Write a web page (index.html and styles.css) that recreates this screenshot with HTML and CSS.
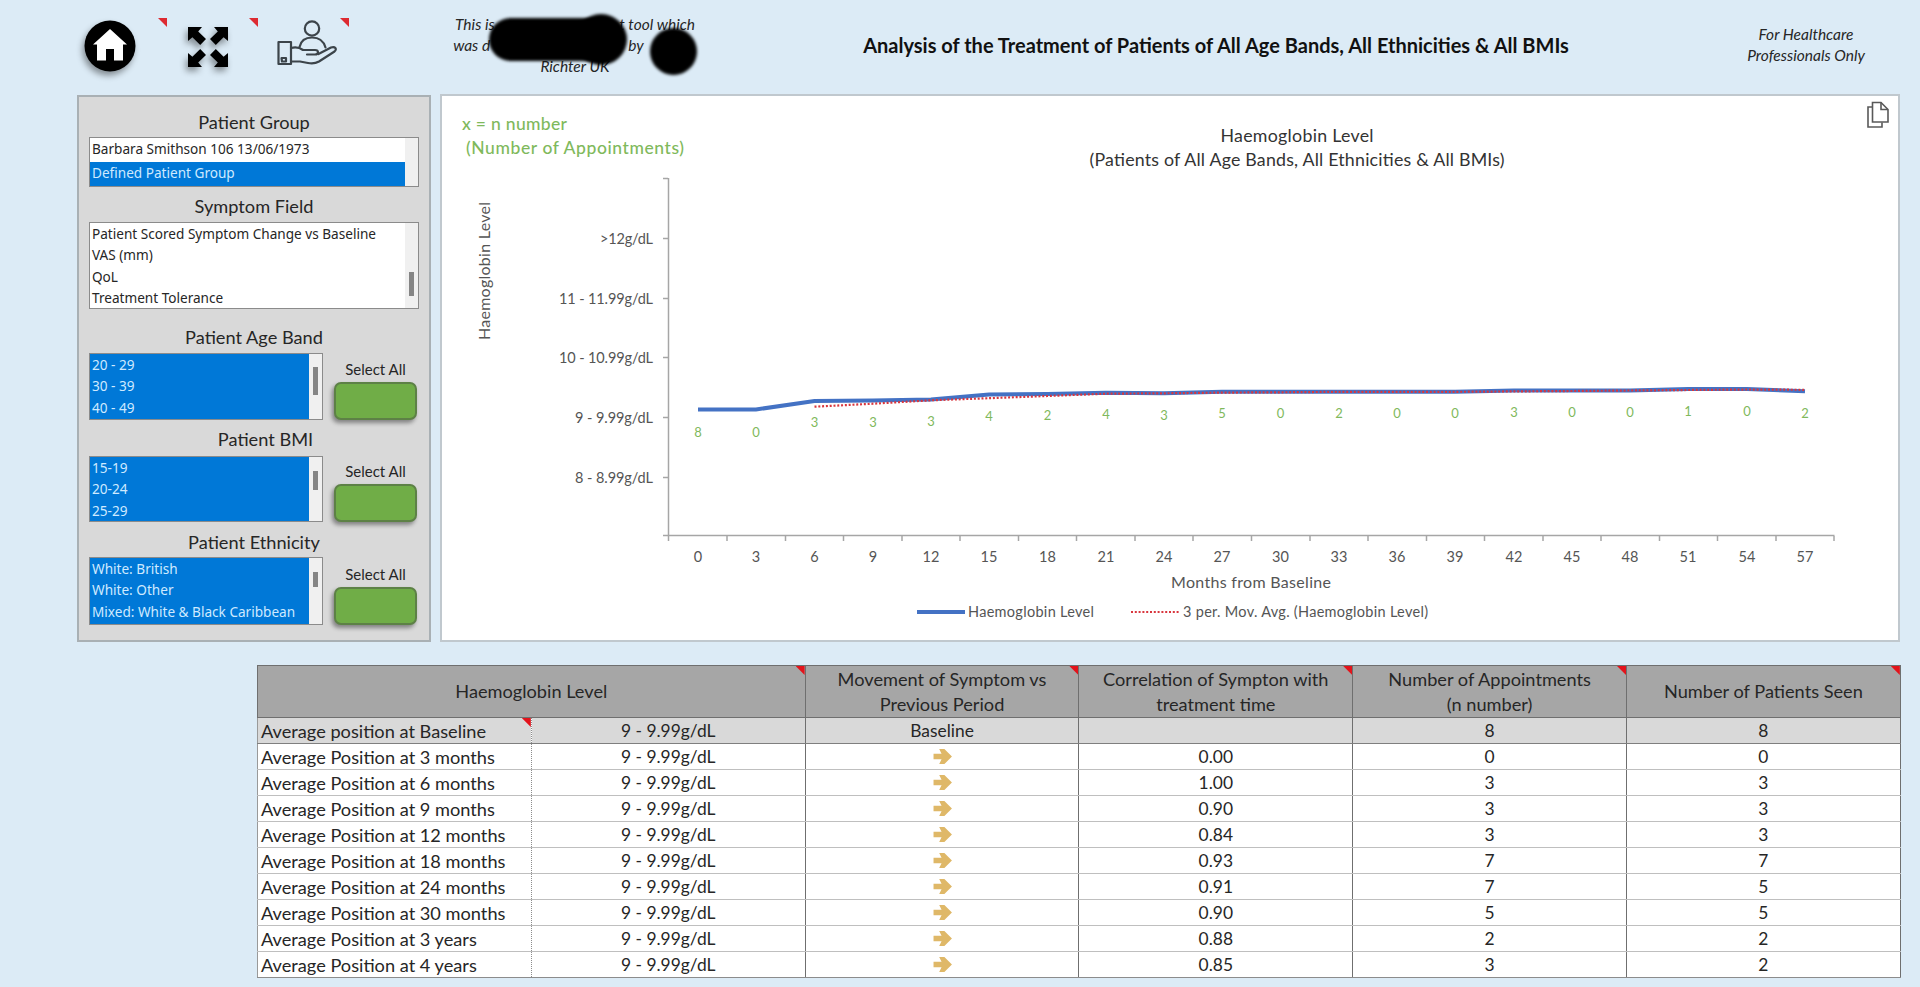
FILE: index.html
```
<!DOCTYPE html>
<html lang="en">
<head>
<meta charset="UTF-8" />
<meta name="viewport" content="width=device-width, initial-scale=1" />
<title>Analysis of Treatment</title>
<link rel="stylesheet" href="styles.css">
</head>
<body>

<header class="topbar">
  <nav class="tools">
    <a class="tool tool-home" aria-label="Home">
      <svg width="52" height="52" viewBox="0 0 52 52">
        <circle cx="26" cy="26" r="25.5" fill="#000" />
        <path d="M26 9 L43 24.5 H39 V40.5 H30 V29 H22 V40.5 H13 V24.5 H9 Z" fill="#fff" />
      </svg>
    </a>
    <a class="tool tool-expand" aria-label="Full screen">
      <svg width="40" height="40" viewBox="0 0 40 40">
        <g id="corner">
          <path d="M0 0 H14 L10.2 4.4 L18 12 L12.2 18 L4.4 10.2 L0 14 Z" />
        </g>
        <use href="#corner" transform="matrix(-1 0 0 1 40 0)" />
        <use href="#corner" transform="matrix(1 0 0 -1 0 40)" />
        <use href="#corner" transform="matrix(-1 0 0 -1 40 40)" />
      </svg>
    </a>
    <a class="tool tool-care" aria-label="Patient care">
      <svg width="61" height="46" viewBox="0 0 61 46" fill="none" stroke="#3c444a" stroke-width="2.2" stroke-linejoin="round" stroke-linecap="round">
        <circle cx="35" cy="8.5" r="7.2" />
        <path d="M22.5 27 C24 20 29 17.5 35 17.5 C41 17.5 46.500 20.500 48.500 27.500" />
        <rect x="1.500" y="22" width="12.500" height="22" />
        <path d="M4.500 38 H9 V41.500 H5 Z" />
        <path d="M14 28 C19 26.500 22 27 26 30 H38 C42 30 42 34.500 38 34.500 H30" />
        <path d="M41.500 34 L54 27.500 C58 26 60.500 29 57.500 31.500 L42 41.500 C38 43.800 35 43.800 31 43 L23 41.500 H14" />
      </svg>
    </a>
  </nav>
  <div class="about">
    <p>This is <span class="gap gap-1"></span>t tool which</p>
    <p>was d<span class="gap gap-2"></span>by <span class="gap gap-3"></span></p>
    <p>Richter UK</p>
    <span class="blot blot-bar"></span>
    <span class="blot blot-end"></span>
    <span class="blot blot-dot"></span>
  </div>
  <h1>Analysis of the Treatment of Patients of All Age Bands, All Ethnicities &amp; All BMIs</h1>
  <p class="audience">For Healthcare<br>Professionals Only</p>
</header>

<main class="dashboard">
  <aside class="filters">
    <h2 class="h-group">Patient Group</h2>
    <ul class="listbox list-group">
      <li>Barbara Smithson 106 13/06/1973</li>
      <li class="selected">Defined Patient Group</li>
    </ul>

    <h2 class="h-symptom">Symptom Field</h2>
    <ul class="listbox list-symptom">
      <li>Patient Scored Symptom Change vs Baseline</li>
      <li>VAS (mm)</li>
      <li>QoL</li>
      <li>Treatment Tolerance</li>
      <span class="thumb thumb-symptom"></span>
    </ul>

    <h2 class="h-age">Patient Age Band</h2>
    <div class="filter-row row-age">
      <ul class="listbox">
        <li class="selected">20 - 29</li>
        <li class="selected">30 - 39</li>
        <li class="selected">40 - 49</li>
        <span class="thumb thumb-age"></span>
      </ul>
      <div class="select-all">
        <span>Select All</span>
        <button aria-label="Select all age bands"></button>
      </div>
    </div>

    <h2 class="h-bmi">Patient BMI</h2>
    <div class="filter-row row-bmi">
      <ul class="listbox">
        <li class="selected">15-19</li>
        <li class="selected">20-24</li>
        <li class="selected">25-29</li>
        <span class="thumb thumb-bmi"></span>
      </ul>
      <div class="select-all">
        <span>Select All</span>
        <button aria-label="Select all BMIs"></button>
      </div>
    </div>

    <h2 class="h-ethnicity">Patient Ethnicity</h2>
    <div class="filter-row row-ethnicity">
      <ul class="listbox">
        <li class="selected">White: British</li>
        <li class="selected">White: Other</li>
        <li class="selected">Mixed: White &amp; Black Caribbean</li>
        <span class="thumb thumb-ethnicity"></span>
      </ul>
      <div class="select-all">
        <span>Select All</span>
        <button aria-label="Select all ethnicities"></button>
      </div>
    </div>
  </aside>

  <section class="chart-panel">
    <svg class="chart" width="1456" height="544" viewBox="442 96 1456 544">
      <g class="n-note">
        <text x="462" y="130" textLength="105">x = n number</text>
        <text x="466" y="154" textLength="218">(Number of Appointments)</text>
      </g>
      <g class="chart-title">
        <text x="1297" y="142" textLength="153">Haemoglobin Level</text>
        <text x="1297" y="166" textLength="415">(Patients of All Age Bands, All Ethnicities &amp; All BMIs)</text>
      </g>
      <g class="copy-icon">
        <path d="M1872.500 102.500 H1881 L1888 109.500 V122 H1872.500 Z" />
        <path d="M1881 102.500 V109.500 H1888" />
        <path d="M1872 107 H1868 V127 H1882 V122.500" />
      </g>

      <path class="axis" d="M668.500 178 V535.500 H1834.500 M663 178.500 H668 M663 238.500 H668 M663 298.500 H668 M663 357.500 H668 M663 417.500 H668 M663 477.500 H668 M663 535.500 H668" />
      <path class="axis" d="M668.500 536 v5 M727 536 v5 M785.500 536 v5 M843.500 536 v5 M902 536 v5 M960 536 v5 M1018.500 536 v5 M1076.500 536 v5 M1135 536 v5 M1193 536 v5 M1251.500 536 v5 M1310 536 v5 M1368 536 v5 M1426.500 536 v5 M1484.500 536 v5 M1543 536 v5 M1601 536 v5 M1659.500 536 v5 M1717.500 536 v5 M1776 536 v5 M1834 536 v5" />

      <g class="y-labels">
        <text x="653" y="244" textLength="53">&gt;12g/dL</text>
        <text x="653" y="304" textLength="94">11 - 11.99g/dL</text>
        <text x="653" y="363" textLength="94">10 - 10.99g/dL</text>
        <text x="653" y="423" textLength="78">9 - 9.99g/dL</text>
        <text x="653" y="483" textLength="78">8 - 8.99g/dL</text>
      </g>
      <text class="axis-title" transform="translate(490 271) rotate(-90)" textLength="138">Haemoglobin Level</text>

      <polyline class="line-level" points="698,409.500 756,409.500 814.500,401 873,400.500 931,399.500 989,394.500 1047.500,394 1106,392.700 1164,393.300 1222,391.800 1280.500,391.800 1339,391.800 1397,391.800 1455,391.800 1514,390.500 1572,390.500 1630,390.500 1688,389 1747,389 1805,391.300" />
      <polyline class="line-avg" points="814.500,406.700 873,403.700 931,400.300 989,398.200 1047.500,396 1106,393.700 1164,393.300 1222,392.600 1280.500,392.300 1339,391.800 1397,391.800 1455,391.800 1514,391.400 1572,391 1630,390.500 1688,390 1747,389.500 1805,389.800" />

      <g class="n-labels">
        <text x="698" y="436.500">8</text>
        <text x="756" y="436.500">0</text>
        <text x="814.500" y="427">3</text>
        <text x="873" y="426.500">3</text>
        <text x="931" y="426">3</text>
        <text x="989" y="420.500">4</text>
        <text x="1047.500" y="420">2</text>
        <text x="1106" y="419">4</text>
        <text x="1164" y="419.500">3</text>
        <text x="1222" y="418">5</text>
        <text x="1280.500" y="418">0</text>
        <text x="1339" y="418">2</text>
        <text x="1397" y="418">0</text>
        <text x="1455" y="418">0</text>
        <text x="1514" y="417">3</text>
        <text x="1572" y="417">0</text>
        <text x="1630" y="417">0</text>
        <text x="1688" y="416">1</text>
        <text x="1747" y="416">0</text>
        <text x="1805" y="417.500">2</text>
      </g>

      <g class="x-labels">
        <text x="698" y="562">0</text>
        <text x="756" y="562">3</text>
        <text x="814.500" y="562">6</text>
        <text x="873" y="562">9</text>
        <text x="931" y="562">12</text>
        <text x="989" y="562">15</text>
        <text x="1047.500" y="562">18</text>
        <text x="1106" y="562">21</text>
        <text x="1164" y="562">24</text>
        <text x="1222" y="562">27</text>
        <text x="1280.500" y="562">30</text>
        <text x="1339" y="562">33</text>
        <text x="1397" y="562">36</text>
        <text x="1455" y="562">39</text>
        <text x="1514" y="562">42</text>
        <text x="1572" y="562">45</text>
        <text x="1630" y="562">48</text>
        <text x="1688" y="562">51</text>
        <text x="1747" y="562">54</text>
        <text x="1805" y="562">57</text>
      </g>
      <text class="axis-title" x="1251" y="588" textLength="160">Months from Baseline</text>

      <g class="legend">
        <path class="line-level" d="M917 612 H965" />
        <text x="968" y="617" textLength="126">Haemoglobin Level</text>
        <path class="line-avg" d="M1131 612 H1179" />
        <text x="1183" y="617" textLength="245">3 per. Mov. Avg. (Haemoglobin Level)</text>
      </g>
    </svg>
  </section>
</main>

<svg class="defs" width="0" height="0">
  <symbol id="flat-arrow" viewBox="0 0 21 18">
    <path d="M1 6 H9.500 L7 1 H12.500 L20.500 9 L12.500 17 H7 L9.500 12 H1 Z" />
  </symbol>
</svg>

<table class="results">
  <colgroup>
    <col class="c-label"><col class="c-value"><col class="c-move"><col class="c-corr"><col class="c-appt"><col class="c-seen">
  </colgroup>
  <thead>
    <tr>
      <th colspan="2" class="note">Haemoglobin Level</th>
      <th class="note">Movement of Symptom vs<br>Previous Period</th>
      <th class="note">Correlation of Sympton with<br>treatment time</th>
      <th class="note">Number of Appointments<br>(n number)</th>
      <th class="note">Number of Patients Seen</th>
    </tr>
  </thead>
  <tbody>
    <tr class="baseline">
      <td class="note">Average position at Baseline</td><td>9 - 9.99g/dL</td><td>Baseline</td><td></td><td>8</td><td>8</td>
    </tr>
    <tr>
      <td>Average Position at 3 months</td><td>9 - 9.99g/dL</td>
      <td><svg class="arrow"><use href="#flat-arrow" /></svg></td><td>0.00</td><td>0</td><td>0</td>
    </tr>
    <tr>
      <td>Average Position at 6 months</td><td>9 - 9.99g/dL</td>
      <td><svg class="arrow"><use href="#flat-arrow" /></svg></td><td>1.00</td><td>3</td><td>3</td>
    </tr>
    <tr>
      <td>Average Position at 9 months</td><td>9 - 9.99g/dL</td>
      <td><svg class="arrow"><use href="#flat-arrow" /></svg></td><td>0.90</td><td>3</td><td>3</td>
    </tr>
    <tr>
      <td>Average Position at 12 months</td><td>9 - 9.99g/dL</td>
      <td><svg class="arrow"><use href="#flat-arrow" /></svg></td><td>0.84</td><td>3</td><td>3</td>
    </tr>
    <tr>
      <td>Average Position at 18 months</td><td>9 - 9.99g/dL</td>
      <td><svg class="arrow"><use href="#flat-arrow" /></svg></td><td>0.93</td><td>7</td><td>7</td>
    </tr>
    <tr>
      <td>Average Position at 24 months</td><td>9 - 9.99g/dL</td>
      <td><svg class="arrow"><use href="#flat-arrow" /></svg></td><td>0.91</td><td>7</td><td>5</td>
    </tr>
    <tr>
      <td>Average Position at 30 months</td><td>9 - 9.99g/dL</td>
      <td><svg class="arrow"><use href="#flat-arrow" /></svg></td><td>0.90</td><td>5</td><td>5</td>
    </tr>
    <tr>
      <td>Average Position at 3 years</td><td>9 - 9.99g/dL</td>
      <td><svg class="arrow"><use href="#flat-arrow" /></svg></td><td>0.88</td><td>2</td><td>2</td>
    </tr>
    <tr>
      <td>Average Position at 4 years</td><td>9 - 9.99g/dL</td>
      <td><svg class="arrow"><use href="#flat-arrow" /></svg></td><td>0.85</td><td>3</td><td>2</td>
    </tr>
  </tbody>
</table>

</body>
</html>
```
FILE: styles.css
```
* {
  box-sizing: border-box;
}
body {
  margin: 0;
  height: 987px;
  overflow: hidden;
  background: #dcebf6;
  color: #262626;
  font-family: Lato, "Liberation Sans", sans-serif;
}
h1, h2, p, ul {
  margin: 0;
  padding: 0;
}

/* top bar */
.topbar {
  display: flex;
  align-items: flex-start;
  height: 94px;
  padding-left: 84px;
}
.tools {
  display: flex;
  width: 360px;
}
.tool {
  position: relative;
  height: 70px;
}
.tool svg {
  display: block;
}
.tool::after {
  content: "";
  position: absolute;
  top: 18px;
  right: 0;
  width: 9px;
  height: 9px;
  background: #dd2a31;
  clip-path: polygon(0 0, 100% 0, 100% 100%);
}
.tool-home {
  width: 83px;
  padding-top: 20px;
}
.tool-expand {
  width: 91px;
  padding: 27px 0 0 21px;
}
.tool-care {
  width: 91px;
  padding: 20px 0 0 19px;
}
.tool-home svg,
.tool-expand svg {
  filter: drop-shadow(-2px 4px 3px rgba(0, 0, 0, 0.4));
}
.about {
  position: relative;
  width: 262px;
  padding-top: 14px;
  text-align: center;
  font-size: 15.5px;
  font-style: italic;
  line-height: 21px;
  white-space: nowrap;
}
.gap {
  display: inline-block;
}
.gap-1 {
  width: 121px;
}
.gap-2 {
  width: 138px;
}
.gap-3 {
  width: 50px;
}
.blot {
  position: absolute;
  background: #000;
  filter: blur(1.5px);
}
.blot-bar {
  left: 45px;
  top: 18px;
  width: 120px;
  height: 43px;
  border-radius: 22px;
}
.blot-end {
  left: 131px;
  top: 14px;
  width: 52px;
  height: 51px;
  border-radius: 50%;
}
.blot-dot {
  left: 206px;
  top: 28px;
  width: 47px;
  height: 47px;
  border-radius: 50%;
}
h1 {
  width: 1020px;
  padding-top: 32px;
  text-align: center;
  font-size: 20px;
  line-height: 26px;
  color: #111;
}
.audience {
  width: 160px;
  padding-top: 24px;
  text-align: center;
  font-size: 15.5px;
  font-style: italic;
  line-height: 21px;
}

/* filters and chart */
.dashboard {
  display: flex;
  gap: 9px;
  padding-left: 77px;
}
.filters {
  width: 354px;
  height: 547px;
  margin-top: 1px;
  padding: 0 10px;
  border: 2px solid #a9b0b4;
  background: #d9d9d9;
}
.filters h2 {
  text-align: center;
  font-size: 18.2px;
  font-weight: 400;
  line-height: 24px;
}
.filters .h-group {
  margin: 13px 0 3px;
}
.filters .h-symptom {
  margin: 7px 0 4px;
}
.filters .h-age {
  margin: 16px 0 4px;
}
.filters .h-bmi {
  margin: 7px 0 5px;
  padding-left: 23px;
}
.filters .h-ethnicity {
  margin: 8px 0 3px;
}
.listbox {
  position: relative;
  padding-right: 13px;
  border: 1px solid #8b8b8b;
  background: linear-gradient(to left, #f0f0f0 13px, #fff 13px);
  list-style: none;
  font-family: "Noto Sans", "Open Sans", sans-serif;
  font-size: 13.6px;
  overflow: hidden;
}
.listbox li {
  height: 21.3px;
  padding-left: 2px;
  line-height: 22px;
  white-space: nowrap;
}
.listbox .selected {
  background: #0078d7;
  color: #cfeaff;
}
.list-group {
  height: 50px;
}
.list-group li {
  height: 24px;
  line-height: 22px;
}
.list-symptom {
  height: 87px;
}
.thumb {
  position: absolute;
  right: 4px;
  width: 5px;
  background: #858585;
}
.thumb-symptom {
  top: 49px;
  height: 24px;
}
.thumb-age {
  top: 13px;
  height: 28px;
}
.thumb-bmi {
  top: 14px;
  height: 19px;
}
.thumb-ethnicity {
  top: 14px;
  height: 15px;
}
.filter-row {
  display: flex;
  gap: 11px;
}
.filter-row .listbox {
  width: 234px;
}
.filter-row .listbox li {
  line-height: 21px;
}
.row-age {
  height: 67px;
}
.row-bmi {
  height: 66px;
}
.row-ethnicity {
  height: 68px;
}
.filter-row .listbox li:nth-child(3) {
  height: 25px;
}
.select-all {
  display: flex;
  flex-direction: column;
  justify-content: flex-end;
  width: 83px;
  text-align: center;
  font-size: 15px;
  line-height: 20px;
}
.select-all button {
  height: 38px;
  margin-top: 3px;
  border: 2px solid #5d8146;
  border-radius: 7px;
  background: #70ad47;
  box-shadow: -2px 3px 4px rgba(0, 0, 0, 0.4);
}
.chart-panel {
  width: 1460px;
  height: 548px;
  border: 2px solid #c0c8ce;
  background: #fff;
}
.chart {
  display: block;
}
.n-note {
  font-size: 17.5px;
  font-weight: 500;
  fill: #7fb95c;
}
.chart-title {
  font-size: 17.8px;
  text-anchor: middle;
  fill: #333;
}
.copy-icon {
  fill: none;
  stroke: #595959;
  stroke-width: 1.6;
}
.axis {
  fill: none;
  stroke: #a6a6a6;
  stroke-width: 1.5;
}
.y-labels {
  font-size: 14.5px;
  text-anchor: end;
  fill: #555;
}
.x-labels {
  font-size: 14.5px;
  text-anchor: middle;
  fill: #555;
}
.n-labels {
  font-size: 13px;
  text-anchor: middle;
  fill: #7fb95c;
}
.axis-title {
  font-size: 16px;
  text-anchor: middle;
  fill: #555;
}
.legend {
  font-size: 14.5px;
  fill: #555;
}
.line-level {
  fill: none;
  stroke: #4472c4;
  stroke-width: 4;
}
.line-avg {
  fill: none;
  stroke: #d9363e;
  stroke-width: 2.2;
  stroke-dasharray: 2 1.8;
}
.defs {
  position: absolute;
}

/* results table */
.results {
  width: 1643px;
  margin: 23px 0 0 257px;
  border-collapse: collapse;
  table-layout: fixed;
  background: #fff;
  font-size: 17.4px;
  text-align: center;
}
.c-label,
.c-value,
.c-move,
.c-corr,
.c-appt,
.c-seen {
  width: 273.8px;
}
.results th,
.results td {
  position: relative;
  padding: 0;
  border-right: 1px solid #6f6f6f;
}
.results th {
  height: 52px;
  border: 1px solid #6f6f6f;
  background: #a6a6a6;
  font-size: 18.2px;
  font-weight: 400;
  line-height: 25px;
}
.results td {
  height: 26px;
  border-bottom: 1px solid #bfbfbf;
  line-height: 24px;
}
.results td:first-child {
  padding-left: 3px;
  border-left: 1px solid #999;
  border-right: 1px dotted #8c8c8c;
  font-size: 18.2px;
  text-align: left;
}
.results .baseline td {
  border-bottom-color: #7f7f7f;
  background: #d9d9d9;
}
.results tr:last-child td {
  border-bottom-color: #8c8c8c;
}
.note::after {
  content: "";
  position: absolute;
  top: 0;
  right: 0;
  width: 9px;
  height: 9px;
  background: #e3131b;
  clip-path: polygon(0 0, 100% 0, 100% 100%);
}
.arrow {
  display: block;
  width: 21px;
  height: 17px;
  margin: 0 auto;
  fill: #dfb868;
}
```
